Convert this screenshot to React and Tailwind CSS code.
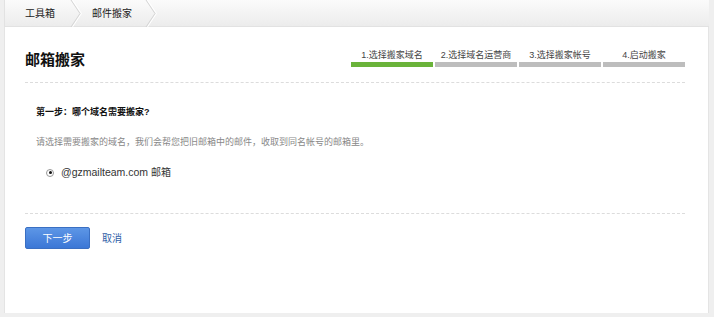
import React from "react";

const steps = ["1.选择搬家域名", "2.选择域名运营商", "3.选择搬家帐号", "4.启动搬家"];

const Chevron = () => (
  <svg width="12" height="27" viewBox="0 0 12 27" className="shrink-0">
    <path d="M1 0 L10 13.5 L1 27" fill="none" stroke="#d4d4d4" strokeWidth="1" />
    <path d="M2.5 0 L11.5 13.5 L2.5 27" fill="none" stroke="#ffffff" strokeWidth="1" />
  </svg>
);

const App = () => {
  return (
    <div
      className="w-[714px] h-[317px] bg-[#efefef] pl-[4px] pr-[5px] pb-[4px] flex flex-col text-[#333]"
      style={{ fontFamily: '"Liberation Sans", Arial, "Noto Sans CJK SC", sans-serif' }}
    >
      <div className="h-[27px] shrink-0 flex items-center bg-gradient-to-b from-[#fbfbfb] to-[#ececec] border-b border-[#dcdcdc] border-l border-[#e2e2e2] text-[10px] text-[#222]">
        <span className="pl-[20px] pr-[15px]">工具箱</span>
        <Chevron />
        <span className="pl-[10px] pr-[13px]">邮件搬家</span>
        <Chevron />
      </div>
      <div className="flex-1 bg-white border-l border-r border-[#e4e4e4] px-[20px]">
        <div className="flex items-end justify-between h-[56px] pb-[15px] border-b border-dashed border-[#dcdcdc] mr-[3px]">
          <h1 className="text-[15px] font-bold text-[#111] leading-none">邮箱搬家</h1>
          <div className="flex gap-[2px]">
            {steps.map((s, i) => (
              <div key={s} className="w-[82px] flex flex-col items-center">
                <span className="text-[9px] leading-none whitespace-nowrap text-[#444] mb-[2px]">{s}</span>
                <div className={`w-full h-[5px] ${i === 0 ? "bg-[#6ab33a]" : "bg-[#bdbdbd]"}`} />
              </div>
            ))}
          </div>
        </div>
        <div className="pl-[11px] pt-[25px] pb-[35px] border-b border-dashed border-[#dcdcdc] mr-[3px]">
          <p className="text-[9px] font-bold text-[#111] leading-none">第一步：哪个域名需要搬家?</p>
          <p className="text-[9px] text-[#888] leading-none mt-[21px]">
            请选择需要搬家的域名，我们会帮您把旧邮箱中的邮件，收取到同名帐号的邮箱里。
          </p>
          <label className="flex items-center mt-[20px] pl-[10px] text-[9px] text-[#333] leading-none h-[11px]">
            <span className="w-[8px] h-[8px] rounded-full border border-[#999] bg-white flex items-center justify-center mr-[7px]">
              <span className="w-[3px] h-[3px] rounded-full bg-[#111]" />
            </span>
            <span className="text-[10.5px]">@gzmailteam.com</span>
            <span className="ml-[3px] text-[10px]">邮箱</span>
          </label>
        </div>
        <div className="flex items-center pt-[13px]">
          <button className="w-[65px] h-[22px] rounded-[2px] bg-gradient-to-b from-[#5d96e6] to-[#3b77d6] border border-[#3a6fc2] text-white text-[10px]">
            下一步
          </button>
          <a className="ml-[12px] text-[10px] text-[#2f5ea8]">取消</a>
        </div>
      </div>
    </div>
  );
};

export default App;
